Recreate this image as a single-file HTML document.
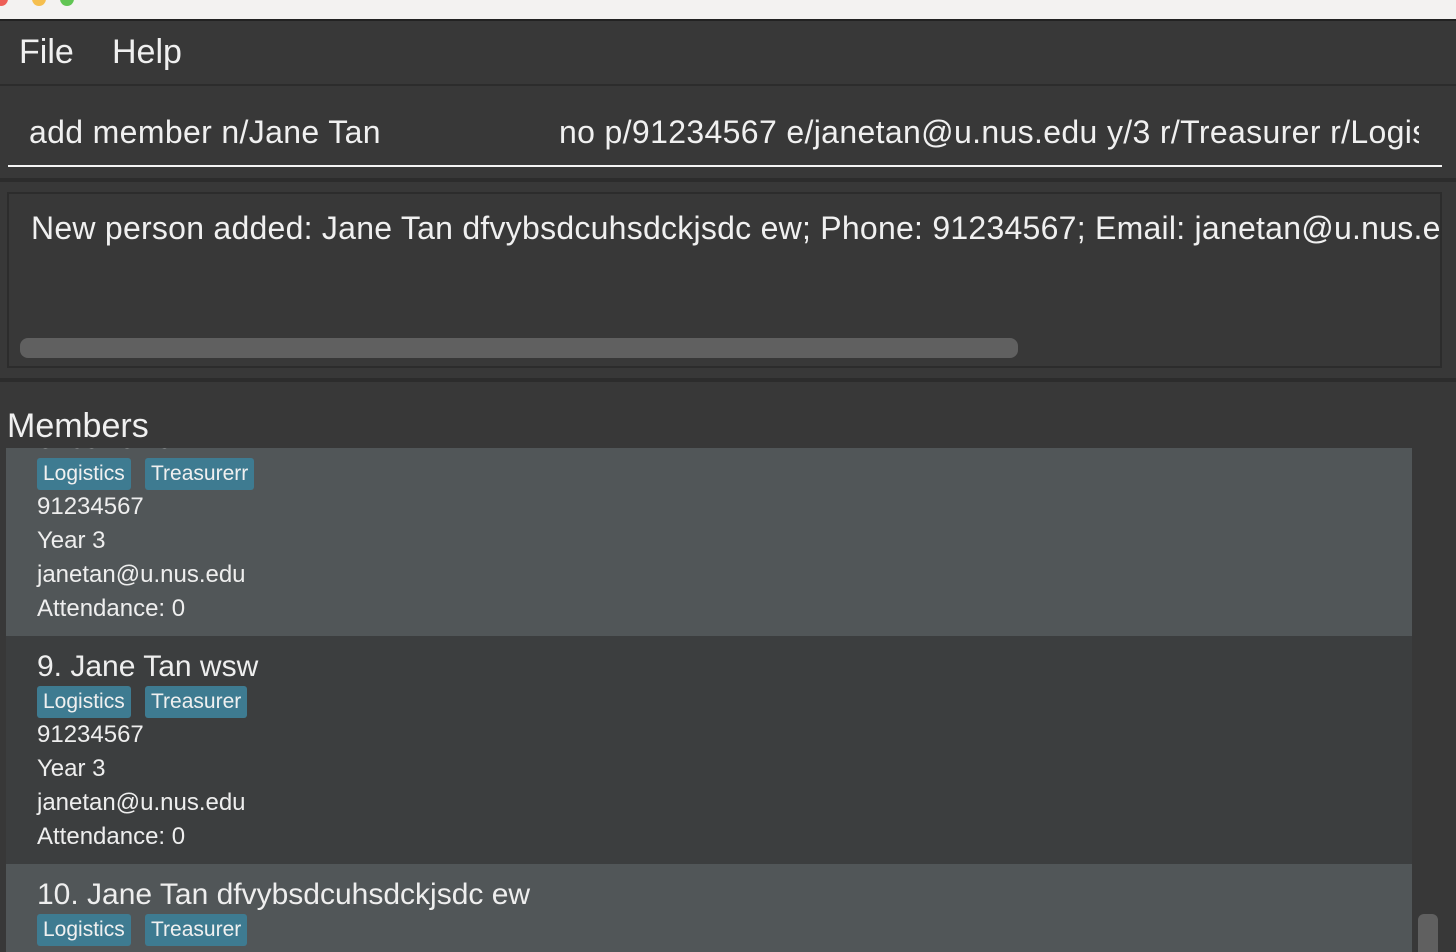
<!DOCTYPE html>
<html><head><style>
*{margin:0;padding:0;box-sizing:border-box}
html,body{width:1456px;height:952px;overflow:hidden}
body{background:#383838;font-family:"Liberation Sans",sans-serif;color:#f0f0f0;position:relative}
.a{position:absolute;white-space:nowrap}
.card{position:absolute;left:0;width:1406px;height:228px}
.card .t{position:absolute;left:31px;line-height:34px;font-size:24px;color:#eee}
.tag{position:absolute;top:50px;height:32px;background:#3e7b91;border-radius:3px;font-size:21px;line-height:32px;padding:0 6px;color:#f0f0f0}
</style></head><body>
<div class="a" style="left:0;top:0;width:1456px;height:21px;background:#f3f2f1;border-bottom:2px solid #222"></div>
<div class="a" style="left:-6px;top:-8px;width:14px;height:14px;border-radius:50%;background:#ed5f57"></div>
<div class="a" style="left:32px;top:-8px;width:14px;height:14px;border-radius:50%;background:#f5bf4f"></div>
<div class="a" style="left:60px;top:-8px;width:14px;height:14px;border-radius:50%;background:#61c554"></div>
<div class="a" style="left:0;top:84px;width:1456px;height:2px;background:#2c2c2c"></div>
<div class="a" style="left:19px;top:32px;font-size:34px;line-height:40px">File</div>
<div class="a" style="left:112px;top:32px;font-size:34px;line-height:40px">Help</div>
<div class="a" style="left:0;top:178px;width:1456px;height:4px;background:#2c2c2c"></div>
<div class="a" style="left:29px;top:112px;font-size:32px;line-height:40px;letter-spacing:0.35px">add member n/Jane Tan</div>
<div class="a" style="left:559px;top:112px;font-size:32px;line-height:40px;letter-spacing:0.35px;width:860px;overflow:hidden">no p/91234567 e/janetan@u.nus.edu y/3 r/Treasurer r/Logistics</div>
<div class="a" style="left:8px;top:165px;width:1434px;height:2px;background:#f5f5f5"></div>
<div class="a" style="left:7px;top:192px;width:1435px;height:176px;border:2px solid #2c2c2c;background:#383838;overflow:hidden">
<div class="a" style="left:22px;top:14px;font-size:32px;line-height:40px;letter-spacing:0.25px">New person added: Jane Tan dfvybsdcuhsdckjsdc ew; Phone: 91234567; Email: janetan@u.nus.edu; Year: 3</div>
<div class="a" style="left:11px;top:144px;width:998px;height:20px;border-radius:8px;background:#606060"></div>
</div>
<div class="a" style="left:0;top:378px;width:1456px;height:4px;background:#2c2c2c"></div>
<div class="a" style="left:6px;top:448px;width:1406px;height:504px;overflow:hidden">
 <div class="card" style="top:-40px;background:#515658">
  <div class="t" style="top:14px;font-size:30px;line-height:34px">8. Jane Tan</div>
  <div class="tag" style="left:31px">Logistics</div><div class="tag" style="left:139px">Treasurerr</div>
  <div class="t" style="top:82px">91234567</div><div class="t" style="top:116px">Year 3</div>
  <div class="t" style="top:150px">janetan@u.nus.edu</div><div class="t" style="top:184px">Attendance: 0</div>
 </div>
 <div class="card" style="top:188px;background:#3c3e3f">
  <div class="t" style="top:14px;font-size:30px;line-height:34px">9. Jane Tan wsw</div>
  <div class="tag" style="left:31px">Logistics</div><div class="tag" style="left:139px">Treasurer</div>
  <div class="t" style="top:82px">91234567</div><div class="t" style="top:116px">Year 3</div>
  <div class="t" style="top:150px">janetan@u.nus.edu</div><div class="t" style="top:184px">Attendance: 0</div>
 </div>
 <div class="card" style="top:416px;background:#515658">
  <div class="t" style="top:14px;font-size:30px;line-height:34px">10. Jane Tan dfvybsdcuhsdckjsdc ew</div>
  <div class="tag" style="left:31px">Logistics</div><div class="tag" style="left:139px">Treasurer</div>
 </div>
</div>
<div class="a" style="left:0;top:382px;width:1456px;height:66px;background:#383838"></div>
<div class="a" style="left:7px;top:406px;font-size:34px;line-height:40px">Members</div>
<div class="a" style="left:1418px;top:914px;width:20px;height:38px;border-radius:6px 6px 0 0;background:#606060"></div>
</body></html>
